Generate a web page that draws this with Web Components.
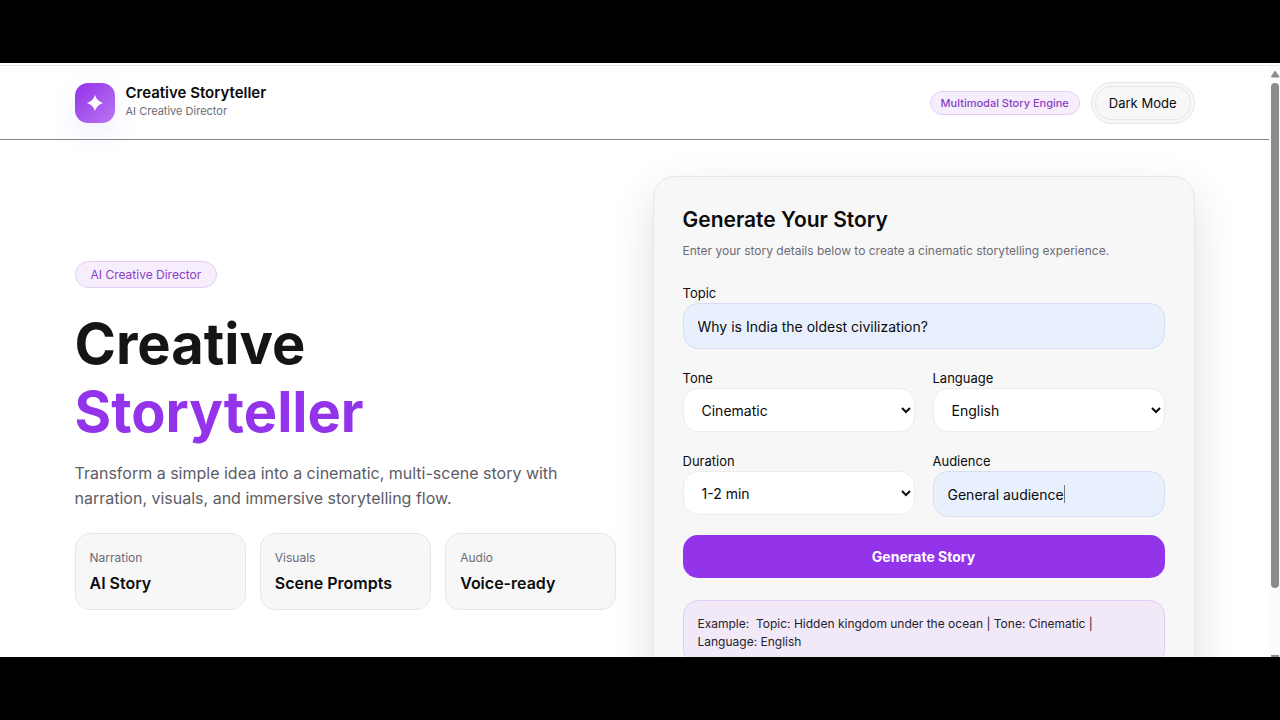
<!DOCTYPE html>
<html lang="en">
<head>
<meta charset="utf-8">
<meta name="viewport" content="width=device-width, initial-scale=1">
<title>Creative Storyteller</title>
<style>
  body {
    margin: 0;
    background: #000;
    color: #0b0b0c;
    font-family: Inter, "Liberation Sans", sans-serif;
    --accent: #9333ea;
    --accent-text: #8b3fc4;
    --accent-soft: #f6edfd;
    --accent-line: #e3cff5;
    --muted: #6b6b76;
    --card: #f7f7f8;
    --line: #e6e6e9;
    --filled: #e8f0fe;
  }
</style>
</head>
<body>
<app-window>
  <site-header slot="header">
    <brand-mark name="Creative Storyteller" tagline="AI Creative Director"></brand-mark>
    <pill-badge slot="actions" small>Multimodal Story Engine</pill-badge>
    <theme-toggle slot="actions">Dark Mode</theme-toggle>
  </site-header>
  <story-hero>
    <pill-badge slot="badge">AI Creative Director</pill-badge>
    <span slot="first">Creative</span>
    <span slot="second">Storyteller</span>
    <span slot="lead">Transform a simple idea into a cinematic, multi-scene story with narration, visuals, and immersive storytelling flow.</span>
    <feature-card label="Narration">AI Story</feature-card>
    <feature-card label="Visuals">Scene Prompts</feature-card>
    <feature-card label="Audio">Voice-ready</feature-card>
  </story-hero>
  <story-form></story-form>
</app-window>

<script>
function define(tag, markup, setup) {
  const template = document.createElement('template');
  template.innerHTML = markup;
  customElements.define(tag, class extends HTMLElement {
    constructor() {
      super();
      this.attachShadow({ mode: 'open' }).append(template.content.cloneNode(true));
    }
    connectedCallback() {
      if (setup) setup(this, this.shadowRoot);
    }
  });
}

define('app-window', `
  <style>
    :host { display: flex; flex-direction: column; height: 100vh; box-sizing: border-box; padding: 63px 0; overflow: hidden; }
    .screen { flex: 1; min-height: 0; display: flex; flex-direction: column; background: #fff; overflow: hidden; }
    .edge { flex: none; height: 1px; margin-top: 2px; background: #e4e4e6; }
    .view { flex: 1; min-height: 0; display: flex; }
    .page { flex: 1; min-width: 0; overflow: hidden; }
    main { box-sizing: content-box; max-width: 1120px; margin: 0 auto; padding: 36px 24px; display: grid; grid-template-columns: 1fr 1fr; gap: 36px; align-items: center; }
  </style>
  <div class="screen">
    <div class="edge"></div>
    <div class="view">
      <div class="page">
        <slot name="header"></slot>
        <main><slot></slot></main>
      </div>
      <page-scrollbar></page-scrollbar>
    </div>
  </div>`);

define('page-scrollbar', `
  <style>
    :host { flex: none; width: 11px; display: flex; flex-direction: column; background: #fcfcfc; }
    svg { flex: none; display: block; width: 11px; height: 17px; }
    .track { flex: 1; display: flex; flex-direction: column; justify-content: space-between; padding: 0 1px 0 2px; }
    .thumb { flex: 0 0 88%; border-radius: 4px; background: #8b8b8b; }
    .down { height: 2px; background: #8b8b8b; }
  </style>
  <svg viewBox="0 0 11 17" aria-hidden="true"><path d="M6 4.5 10.5 10.5Q10.5 11.5 9.5 11.5H3Q2 11.5 2 10.5Z" fill="#8b8b8b"/></svg>
  <div class="track"><div class="thumb"></div><div class="down"></div></div>`);

define('site-header', `
  <style>
    :host { display: block; border-bottom: 1px solid #858585; }
    header { max-width: 1120px; margin: 0 auto; padding: 16px 24px 15px; display: flex; align-items: center; justify-content: space-between; }
    .actions { display: flex; align-items: center; gap: 11px; }
  </style>
  <header><slot></slot><div class="actions"><slot name="actions"></slot></div></header>`);

define('brand-mark', `
  <style>
    :host { display: flex; align-items: center; gap: 11px; }
    .logo { width: 40px; height: 40px; border-radius: 13px; display: grid; place-items: center; background: linear-gradient(135deg, #9333ea, #b975f2); box-shadow: 0 10px 28px rgba(120, 80, 240, .1); }
    svg { width: 16px; height: 16px; display: block; }
    .name { font-size: 15px; line-height: 18px; font-weight: 600; }
    .tagline { font-size: 11px; line-height: 18px; color: var(--muted); }
    .text { padding-bottom: 2px; }
  </style>
  <div class="logo"><svg viewBox="0 0 14 14" aria-hidden="true"><path d="M7 0Q8.6 5.4 14 7Q8.6 8.6 7 14Q5.4 8.6 0 7Q5.4 5.4 7 0Z" fill="#fff"/></svg></div>
  <div class="text"><div class="name"></div><div class="tagline"></div></div>`,
  (el, root) => {
    root.querySelector('.name').textContent = el.getAttribute('name');
    root.querySelector('.tagline').textContent = el.getAttribute('tagline');
  });

define('pill-badge', `
  <style>
    :host { display: inline-block; border: 1px solid var(--accent-line); border-radius: 14px; background: var(--accent-soft); color: var(--accent-text); padding: 0 15px; font-size: 12px; line-height: 25px; white-space: nowrap; }
    :host([small]) { padding: 0 10px; font-size: 11px; line-height: 22px; font-weight: 500; }
  </style>
  <slot></slot>`);

define('theme-toggle', `
  <style>
    :host { display: block; padding: 3px; border: 1px solid var(--line); border-radius: 21px; background: var(--card); }
    button { display: block; height: 34px; padding: 0 13px; border: 1px solid var(--line); border-radius: 17px; background: var(--card); color: inherit; font: 400 13px/18px Inter, sans-serif; white-space: nowrap; cursor: pointer; }
  </style>
  <button type="button"><slot></slot></button>`);

define('story-hero', `
  <style>
    :host { display: block; }
    .badge { display: flex; }
    h1 { margin: 22px 0 15px; font-size: 56px; line-height: 68px; font-weight: 700; color: #151515; }
    h1 span { display: block; }
    .second { color: var(--accent); }
    p { margin: 0 0 22px; font-size: 16px; line-height: 25px; color: #5c5c66; }
    .cards { display: grid; grid-template-columns: repeat(3, 1fr); gap: 14px; }
  </style>
  <div class="badge"><slot name="badge"></slot></div>
  <h1><span><slot name="first"></slot></span><span class="second"><slot name="second"></slot></span></h1>
  <p><slot name="lead"></slot></p>
  <div class="cards"><slot></slot></div>`);

define('feature-card', `
  <style>
    :host { display: block; padding: 15px 14px; border: 1px solid var(--line); border-radius: 15px; background: var(--card); }
    .label { font-size: 12px; line-height: 17px; color: var(--muted); }
    .value { margin-top: 6px; font-size: 16px; line-height: 22px; font-weight: 600; white-space: nowrap; }
  </style>
  <div class="label"></div>
  <div class="value"><slot></slot></div>`,
  (el, root) => { root.querySelector('.label').textContent = el.getAttribute('label'); });

define('story-form', `
  <style>
    :host { display: block; padding: 29px 29px 27px; border: 1px solid var(--line); border-radius: 22px; background: var(--card); box-shadow: 0 18px 46px rgba(0, 0, 0, .13); }
    h2 { margin: 0; font-size: 21px; line-height: 28px; font-weight: 600; }
    p { margin: 8px 0 24px; font-size: 12px; line-height: 18px; color: var(--muted); }
    .row { display: grid; grid-template-columns: 1fr 1fr; gap: 18px; margin-top: 20px; }
    label { display: block; font-size: 13px; line-height: 19px; }
    input, select { display: block; box-sizing: border-box; width: 100%; margin: 0; border: 1px solid #ececef; border-radius: 15px; padding: 0 14px; font: 14px/20px Inter, sans-serif; color: #0b0b0c; outline: none; }
    input { height: 46px; border-color: #d5dff0; background: var(--filled); }
    #audience { background: linear-gradient(#777, #777) 130px 50% / 1px 18px no-repeat var(--filled); }
    select { height: 44px; background: #fff; }
    button { display: block; width: 100%; height: 43px; margin: 18px 0 22px; border: 0; border-radius: 15px; background: var(--accent); color: #fff; font: 700 14px/20px Inter, sans-serif; cursor: pointer; }
    .example { padding: 14px; border: 1px solid var(--accent-line); border-radius: 15px; background: #f1e8f8; font-size: 12px; line-height: 18px; color: #26222b; }
  </style>
  <form onsubmit="return false">
    <h2>Generate Your Story</h2>
    <p>Enter your story details below to create a cinematic storytelling experience.</p>
    <div><label for="topic">Topic</label><input id="topic" type="text" value="Why is India the oldest civilization?"></div>
    <div class="row">
      <div><label for="tone">Tone</label><select id="tone"><option>Cinematic</option></select></div>
      <div><label for="language">Language</label><select id="language"><option>English</option></select></div>
    </div>
    <div class="row">
      <div><label for="duration">Duration</label><select id="duration"><option>1-2 min</option></select></div>
      <div><label for="audience">Audience</label><input id="audience" type="text" value="General audience"></div>
    </div>
    <button type="submit">Generate Story</button>
    <div class="example">Example:&nbsp; Topic: Hidden kingdom under the ocean | Tone: Cinematic | Language: English</div>
  </form>`);
</script>
</body>
</html>
